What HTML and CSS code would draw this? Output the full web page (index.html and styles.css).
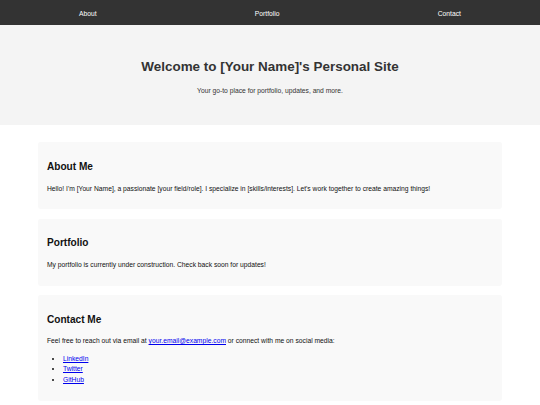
FILE: index.html
```html
<!DOCTYPE html>
<html lang="en">
<head>
<meta charset="utf-8">
<title>[Your Name]'s Personal Site</title>
<link rel="stylesheet" href="styles.css">
</head>
<body>
<nav class="topnav">
  <a href="#about">About</a>
  <a href="#portfolio">Portfolio</a>
  <a href="#contact">Contact</a>
</nav>
<header class="hero">
  <h1>Welcome to [Your Name]'s Personal Site</h1>
  <p>Your go-to place for portfolio, updates, and more.</p>
</header>
<main class="content">
  <section class="card" id="about">
    <h2>About Me</h2>
    <p>Hello! I'm [Your Name], a passionate [your field/role]. I specialize in [skills/interests]. Let's work together to create amazing things!</p>
  </section>
  <section class="card" id="portfolio">
    <h2>Portfolio</h2>
    <p>My portfolio is currently under construction. Check back soon for updates!</p>
  </section>
  <section class="card" id="contact">
    <h2>Contact Me</h2>
    <p>Feel free to reach out via email at <a href="mailto:your.email@example.com">your.email@example.com</a> or connect with me on social media:</p>
    <ul class="links">
      <li><a href="#">LinkedIn</a></li>
      <li><a href="#">Twitter</a></li>
      <li><a href="#">GitHub</a></li>
    </ul>
  </section>
</main>
</body>
</html>
```

FILE: styles.css
```css
html, body {
  margin: 0;
  padding: 0;
}
body {
  font-family: "Liberation Sans", Arial, sans-serif;
  font-size: 6.72px;
  line-height: 1.6;
  color: #111;
  background: #fff;
}
.topnav {
  background: #333;
  display: flex;
  justify-content: space-around;
  padding: 8.6px 0 5.8px;
}
.topnav a {
  color: #fff;
  text-decoration: none;
}
.hero {
  background: #f4f4f4;
  text-align: center;
  padding: 22px 0;
  color: #333;
}
.hero h1 {
  font-size: 13.44px;
  margin: 8.7px 0;
  color: #333;
}
.hero p {
  margin: 6.72px 0;
}
.content {
  padding: 17px 38px 0;
}
.card {
  background: #f9f9f9;
  padding: 8.2px 9px;
  margin-bottom: 9.6px;
  border-radius: 2.4px;
}
.card h2 {
  font-size: 10.08px;
  margin: 8.4px 0;
}
.card p {
  margin: 6.72px 0;
}
.links {
  margin: 6.72px 0;
  padding-left: 16px;
}
a {
  color: #0000ee;
}
```
